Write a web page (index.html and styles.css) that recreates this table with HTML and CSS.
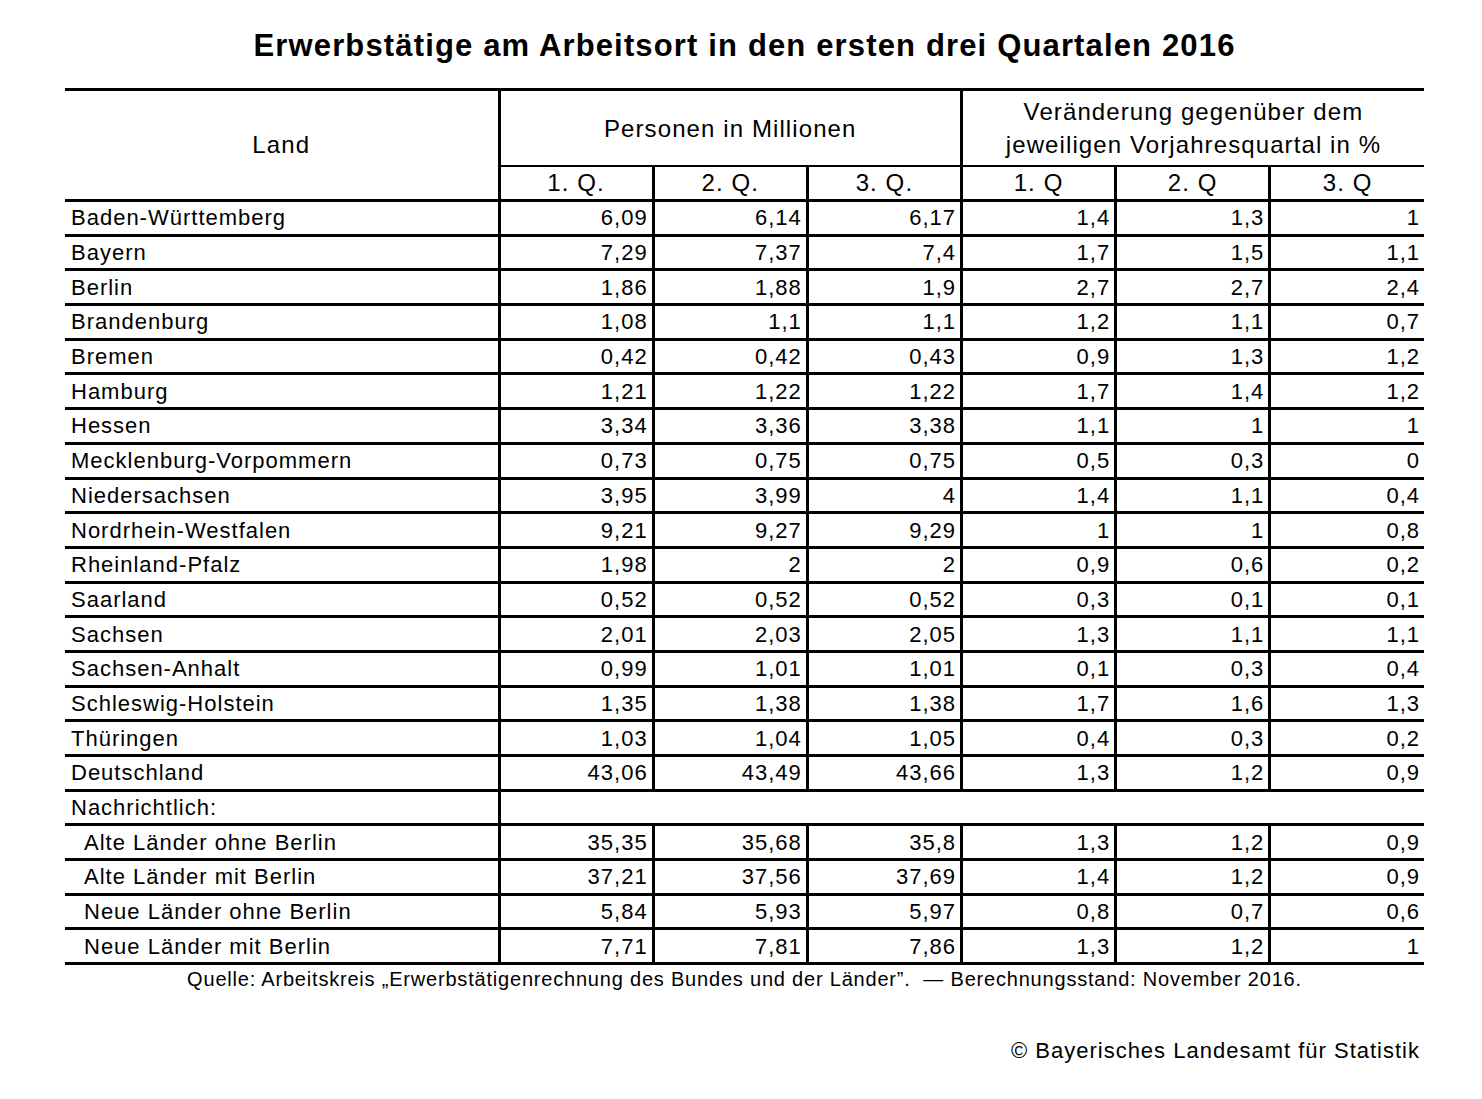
FILE: index.html
```html
<!DOCTYPE html>
<html lang="de">
<head>
<meta charset="utf-8">
<title>Erwerbstätige am Arbeitsort</title>
<link rel="stylesheet" href="styles.css">
</head>
<body>
<div class="page">
  <h1 class="title">Erwerbstätige am Arbeitsort in den ersten drei Quartalen 2016</h1>
  <table class="data">
    <colgroup>
      <col class="c-land">
      <col class="c-num"><col class="c-num"><col class="c-num">
      <col class="c-num"><col class="c-num"><col class="c-num">
    </colgroup>
    <thead>
      <tr class="h1">
        <th rowspan="2" class="land-h">Land</th>
        <th colspan="3" class="grp">Personen in Millionen</th>
        <th colspan="3" class="grp">Veränderung gegenüber dem<br>jeweiligen Vorjahresquartal in %</th>
      </tr>
      <tr class="h2">
        <th>1. Q.</th><th>2. Q.</th><th>3. Q.</th>
        <th>1. Q</th><th>2. Q</th><th>3. Q</th>
      </tr>
    </thead>
    <tbody>
      <tr><td>Baden-Württemberg</td><td>6,09</td><td>6,14</td><td>6,17</td><td>1,4</td><td>1,3</td><td>1</td></tr>
      <tr><td>Bayern</td><td>7,29</td><td>7,37</td><td>7,4</td><td>1,7</td><td>1,5</td><td>1,1</td></tr>
      <tr><td>Berlin</td><td>1,86</td><td>1,88</td><td>1,9</td><td>2,7</td><td>2,7</td><td>2,4</td></tr>
      <tr><td>Brandenburg</td><td>1,08</td><td>1,1</td><td>1,1</td><td>1,2</td><td>1,1</td><td>0,7</td></tr>
      <tr><td>Bremen</td><td>0,42</td><td>0,42</td><td>0,43</td><td>0,9</td><td>1,3</td><td>1,2</td></tr>
      <tr><td>Hamburg</td><td>1,21</td><td>1,22</td><td>1,22</td><td>1,7</td><td>1,4</td><td>1,2</td></tr>
      <tr><td>Hessen</td><td>3,34</td><td>3,36</td><td>3,38</td><td>1,1</td><td>1</td><td>1</td></tr>
      <tr><td>Mecklenburg-Vorpommern</td><td>0,73</td><td>0,75</td><td>0,75</td><td>0,5</td><td>0,3</td><td>0</td></tr>
      <tr><td>Niedersachsen</td><td>3,95</td><td>3,99</td><td>4</td><td>1,4</td><td>1,1</td><td>0,4</td></tr>
      <tr><td>Nordrhein-Westfalen</td><td>9,21</td><td>9,27</td><td>9,29</td><td>1</td><td>1</td><td>0,8</td></tr>
      <tr><td>Rheinland-Pfalz</td><td>1,98</td><td>2</td><td>2</td><td>0,9</td><td>0,6</td><td>0,2</td></tr>
      <tr><td>Saarland</td><td>0,52</td><td>0,52</td><td>0,52</td><td>0,3</td><td>0,1</td><td>0,1</td></tr>
      <tr><td>Sachsen</td><td>2,01</td><td>2,03</td><td>2,05</td><td>1,3</td><td>1,1</td><td>1,1</td></tr>
      <tr><td>Sachsen-Anhalt</td><td>0,99</td><td>1,01</td><td>1,01</td><td>0,1</td><td>0,3</td><td>0,4</td></tr>
      <tr><td>Schleswig-Holstein</td><td>1,35</td><td>1,38</td><td>1,38</td><td>1,7</td><td>1,6</td><td>1,3</td></tr>
      <tr><td>Thüringen</td><td>1,03</td><td>1,04</td><td>1,05</td><td>0,4</td><td>0,3</td><td>0,2</td></tr>
      <tr><td>Deutschland</td><td>43,06</td><td>43,49</td><td>43,66</td><td>1,3</td><td>1,2</td><td>0,9</td></tr>
      <tr><td>Nachrichtlich:</td><td colspan="6"></td></tr>
      <tr><td class="ind">Alte Länder ohne Berlin</td><td>35,35</td><td>35,68</td><td>35,8</td><td>1,3</td><td>1,2</td><td>0,9</td></tr>
      <tr><td class="ind">Alte Länder mit Berlin</td><td>37,21</td><td>37,56</td><td>37,69</td><td>1,4</td><td>1,2</td><td>0,9</td></tr>
      <tr><td class="ind">Neue Länder ohne Berlin</td><td>5,84</td><td>5,93</td><td>5,97</td><td>0,8</td><td>0,7</td><td>0,6</td></tr>
      <tr><td class="ind">Neue Länder mit Berlin</td><td>7,71</td><td>7,81</td><td>7,86</td><td>1,3</td><td>1,2</td><td>1</td></tr>
    </tbody>
  </table>
  <p class="source">Quelle: Arbeitskreis „Erwerbstätigenrechnung des Bundes und der Länder”.&nbsp; — Berechnungsstand: November 2016.</p>
  <p class="copy">© Bayerisches Landesamt für Statistik</p>
</div>
</body>
</html>
```

FILE: styles.css
```css
html, body {
  margin: 0;
  padding: 0;
  background: #ffffff;
}

body {
  font-family: "Liberation Sans", Arial, sans-serif;
  color: #000000;
}

.page {
  width: 1359px;
  margin-left: 65px;
  padding-top: 29px;
}

.title {
  margin: 0;
  height: 59px;
  font-size: 31px;
  line-height: 34px;
  font-weight: bold;
  letter-spacing: 1.15px;
  text-align: center;
}

.data {
  width: 1359px;
  table-layout: fixed;
  border-collapse: collapse;
  font-size: 22px;
  letter-spacing: 1px;
}

.c-land { width: 434px; }
.c-num { width: 154.17px; }

.data th,
.data td {
  padding: 0;
  border-bottom: 3px solid #000;
  border-left: 3px solid #000;
  font-weight: normal;
  white-space: nowrap;
  overflow: hidden;
}

.data th {
  font-size: 24px;
  line-height: 26px;
  letter-spacing: 1.1px;
}

.data th:first-child,
.data td:first-child {
  border-left: none;
}

.data tr.h1 th {
  border-top: 3px solid #000;
  height: 74px;
}

.data tr.h1 th.grp {
  border-bottom: 2px solid #000;
  line-height: 33px;
  text-align: center;
}

.data tr.h2 th {
  border-left: 3px solid #000;
  height: 32px;
  text-align: center;
}

.data .land-h {
  text-align: center;
}

.data tbody td {
  height: 31.7px;
  line-height: 25px;
  text-align: right;
  padding-right: 4px;
}

.data tbody td:first-child {
  text-align: left;
  padding-left: 6px;
  padding-right: 0;
}

.data tbody td.ind {
  padding-left: 19px;
}

.source {
  margin: 3px 0 0 0;
  font-size: 20px;
  letter-spacing: 0.8px;
  text-align: center;
}

.copy {
  margin: 47px 4px 0 0;
  font-size: 22px;
  letter-spacing: 1px;
  text-align: right;
}
```
